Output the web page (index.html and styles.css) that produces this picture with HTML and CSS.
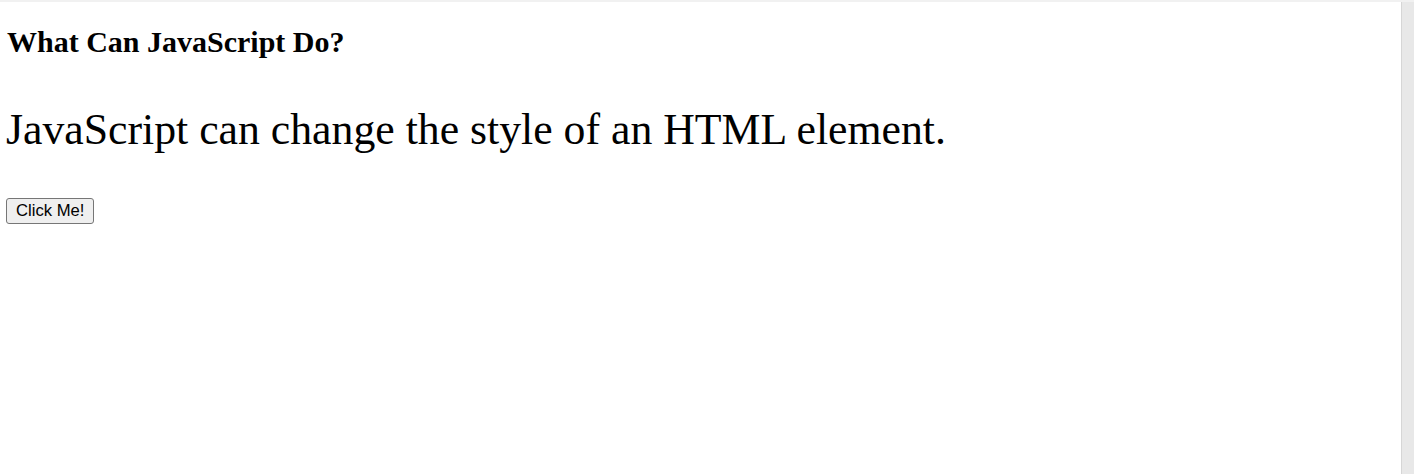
FILE: index.html
```html
<!DOCTYPE html>
<html>
<head>
<meta charset="utf-8">
<link rel="stylesheet" href="styles.css">
</head>
<body>
<div class="frame">
  <main class="page">
    <h2 class="title">What Can JavaScript Do?</h2>
    <p class="demo">JavaScript can change the style of an HTML element.</p>
    <button class="btn" type="button">Click Me!</button>
  </main>
  <div class="scrollbar"></div>
</div>
</body>
</html>
```
FILE: styles.css
```css
html, body {
  margin: 0;
  height: 100%;
  background: #fff;
}
.frame {
  display: flex;
  height: 100%;
  border-top: 2px solid #f1f1f1;
  box-sizing: border-box;
}
.page {
  flex: 1;
  padding: 23px 5px 0 5px;
  font-family: "Liberation Serif", "Times New Roman", serif;
  color: #000;
}
.title {
  margin: 0 0 0 2px;
  font-size: 30px;
  font-weight: bold;
  line-height: 34px;
}
.demo {
  margin: 44.5px 0 0 1px;
  font-size: 43.75px;
  line-height: 50px;
}
.btn {
  display: block;
  margin: 44.5px 0 0 1px;
  font-family: "Liberation Sans", Arial, sans-serif;
  font-size: 16.67px;
  line-height: 20px;
  padding: 1px 9px;
  height: 26px;
  background: #efefef;
  border: 1px solid #767676;
  border-radius: 3px;
  color: #000;
}
.scrollbar {
  width: 12px;
  background: #e8e8e8;
  border-left: 1px solid #d6d6d6;
}
```
